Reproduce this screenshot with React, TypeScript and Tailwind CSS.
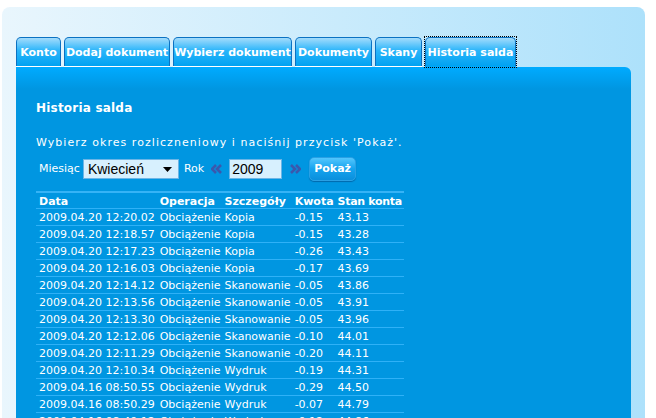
const tabs = [
  { label: "Konto", w: "w-[45px]", active: false },
  { label: "Dodaj dokument", w: "w-[106px]", active: false },
  { label: "Wybierz dokument", w: "w-[119px]", active: false },
  { label: "Dokumenty", w: "w-[77px]", active: false },
  { label: "Skany", w: "w-[47px]", active: false },
  { label: "Historia salda", w: "w-[91px]", active: true },
]

const rows = [
  ["2009.04.20 12:20.02", "Obciążenie", "Kopia", "-0.15", "43.13"],
  ["2009.04.20 12:18.57", "Obciążenie", "Kopia", "-0.15", "43.28"],
  ["2009.04.20 12:17.23", "Obciążenie", "Kopia", "-0.26", "43.43"],
  ["2009.04.20 12:16.03", "Obciążenie", "Kopia", "-0.17", "43.69"],
  ["2009.04.20 12:14.12", "Obciążenie", "Skanowanie", "-0.05", "43.86"],
  ["2009.04.20 12:13.56", "Obciążenie", "Skanowanie", "-0.05", "43.91"],
  ["2009.04.20 12:13.30", "Obciążenie", "Skanowanie", "-0.05", "43.96"],
  ["2009.04.20 12:12.06", "Obciążenie", "Skanowanie", "-0.10", "44.01"],
  ["2009.04.20 12:11.29", "Obciążenie", "Skanowanie", "-0.20", "44.11"],
  ["2009.04.20 12:10.34", "Obciążenie", "Wydruk", "-0.19", "44.31"],
  ["2009.04.16 08:50.55", "Obciążenie", "Wydruk", "-0.29", "44.50"],
  ["2009.04.16 08:50.29", "Obciążenie", "Wydruk", "-0.07", "44.79"],
  ["2009.04.16 08:49.12", "Obciążenie", "Wydruk", "-0.12", "44.86"],
]

function Chevrons({ dir }: { dir: "left" | "right" }) {
  return (
    <svg width="12" height="10" viewBox="0 0 12 10" className={dir === "left" ? "" : "rotate-180"}>
      <path d="M5 1 L1 5 L5 9 M10 1 L6 5 L10 9" fill="none" stroke="#3a58ad" strokeWidth="2.6" />
    </svg>
  )
}

export default function App() {
  return (
    <div className="w-[656px] h-[418px] overflow-hidden bg-white pl-[2px] pt-[7px] font-['DejaVu_Sans',Verdana,sans-serif]">
      <div className="w-[643px] h-[500px] rounded-t-[8px] bg-[linear-gradient(90deg,#e9f6fd,#ade1fb)] pt-[30px] px-[14px]">
        {/* tabs */}
        <div className="flex gap-[3px] h-[30px]">
          {tabs.map((t) => (
            <div
              key={t.label}
              className={`${t.w} h-[30px] flex flex-col ${t.active ? "outline outline-1 outline-dotted outline-black" : ""}`}
            >
              <div className="flex-1 pt-[3px] rounded-t-[5px] border border-b-0 border-[#0b72c2] bg-[linear-gradient(#a4dcfc,#2ab5fa_45%,#00a2f2)] flex items-center justify-center whitespace-nowrap text-[11px] font-bold text-white">
                {t.label}
              </div>
              <div className={`h-[1px] ${t.active ? "bg-[#00a8fd]" : "bg-white"}`} />
            </div>
          ))}
        </div>

        {/* panel */}
        <div className="w-[615px] h-[400px] rounded-tr-[6px] bg-[linear-gradient(#00abff,#0096e1_22px)] pl-[20px] pt-[33px] text-white">
          <h2 className="text-[12px] font-bold leading-[16px] tracking-[0.2px]">Historia salda</h2>
          <p className="mt-[20px] text-[11px] leading-[13px] tracking-[1.05px]">
            Wybierz okres rozliczneniowy i naciśnij przycisk 'Pokaż'.
          </p>

          <div className="mt-[8px] flex items-center h-[24px] text-[11px]">
            <span className="ml-[3px] mr-[3px]">Miesiąc</span>
            <div className="w-[96px] h-[20px] bg-[#d7f0fe] border border-[#6cb5e6] flex items-center justify-between pl-[4px] pr-[6px] text-black text-[14px] font-['Liberation_Sans',Arial,sans-serif]">
              <span>Kwiecień</span>
              <svg width="9" height="5" viewBox="0 0 9 5">
                <path d="M0 0 H9 L4.5 5 Z" fill="#000" />
              </svg>
            </div>
            <span className="ml-[5px] mr-[7px]">Rok</span>
            <Chevrons dir="left" />
            <div className="ml-[6px] w-[53px] h-[20px] bg-[#d7f0fe] border border-[#6cb5e6] flex items-center pl-[2px] text-black text-[14px] font-['Liberation_Sans',Arial,sans-serif]">
              2009
            </div>
            <span className="ml-[7px]">
              <Chevrons dir="right" />
            </span>
            <button className="ml-[8px] w-[47px] h-[24px] rounded-[5px] bg-[linear-gradient(#52c6fd,#15a3ef_50%,#0a8fdc)] border border-[#2aa0e4] shadow-[0_1px_1px_rgba(0,60,120,0.5)] text-[11px] font-bold text-white">
              Pokaż
            </button>
          </div>

          <table className="mt-[10px] border-separate border-spacing-0 text-[11px] leading-[13px]">
            <thead>
              <tr className="text-left">
                {["Data", "Operacja", "Szczegóły", "Kwota", "Stan konta"].map((h, i) => (
                  <th
                    key={h}
                    className={`h-[18px] pt-[1px] border-t-2 border-t-[#36b3f6] border-b border-b-[#2fb1f7] font-bold ${i === 0 ? "px-[3px]" : "px-[2px]"} ${i === 4 ? "tracking-[-0.3px]" : ""}`}
                  >
                    {h}
                  </th>
                ))}
              </tr>
            </thead>
            <tbody>
              {rows.map((r, i) => (
                <tr key={i}>
                  {r.map((c, j) => (
                    <td
                      key={j}
                      className={`h-[17px] p-0 border-b border-[#2fb1f7] whitespace-nowrap ${j === 0 ? "px-[3px]" : "px-[2px]"}`}
                    >
                      {c}
                    </td>
                  ))}
                </tr>
              ))}
            </tbody>
          </table>
        </div>
      </div>
    </div>
  )
}
